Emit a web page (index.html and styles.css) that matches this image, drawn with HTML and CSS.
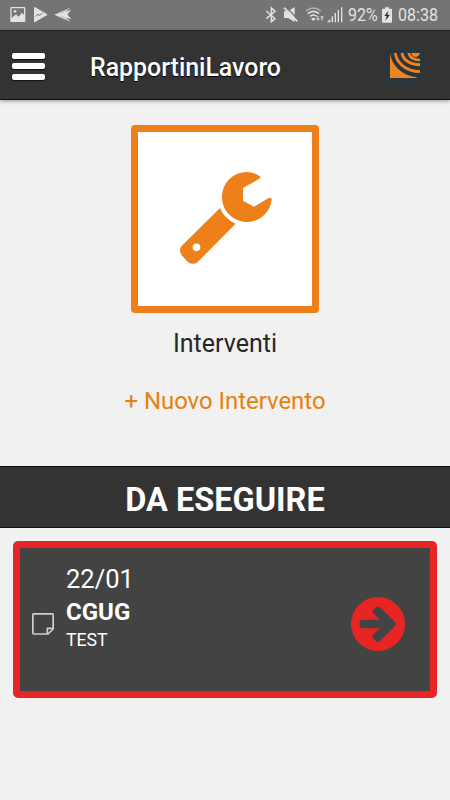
FILE: index.html
```html
<!DOCTYPE html>
<html lang="it">
<head>
<meta charset="utf-8">
<title>RapportiniLavoro</title>
<link rel="stylesheet" href="styles.css">
</head>
<body>
<div class="status">
  <svg class="notifications" width="63" height="18" viewBox="30 18 189 54" fill="#e2e2e2">
    <path fill-rule="evenodd" d="M34 21H73Q76 21 76 24V63Q76 66 73 66H34Q31 66 31 63V24Q31 21 34 21ZM35 25V54L48 43L56 50L66 38L72 45V25Z"/>
    <circle cx="45" cy="34" r="4"/>
    <path d="M102 23Q102 20 106 22L140 42Q143 44 140 46L106 66Q102 68 102 64Z"/>
    <path d="M107 49L114 42L118 47L128 39" fill="none" stroke="#747474" stroke-width="3"/>
    <path d="M163 44L211 23L198 35L214 29L202 43L214 58L198 53L211 65Z"/>
    <path d="M182 40L208 27M182 48L208 60" fill="none" stroke="#909090" stroke-width="1.5"/>
  </svg>
  <div class="indicators">
    <svg width="78" height="18" viewBox="342 18 234 54" fill="none" stroke="#e2e2e2" stroke-width="4.5">
      <path d="M346 33L372 56L361 65V24L372 34L346 56"/>
      <path d="M399 34H411L431 21V66L411 54H399Z" fill="#e2e2e2" stroke="none"/>
      <path d="M403 19L443 60" stroke="#747474" stroke-width="4"/>
      <path d="M399 23L439 64" stroke-width="5"/>
      <path d="M465 33Q487 15 510 33" stroke="#b0b0b0"/>
      <path d="M470 41Q487 27 504 41M477 49Q487 41 497 49" stroke-width="5"/>
      <path d="M480 56Q487 50 494 56L487 63Z" fill="#e2e2e2" stroke="none"/>
      <path d="M501 48V60M497 56L501 61L505 56M513 61V48M509 53L513 48L517 53" stroke-width="3"/>
      <path d="M528 67L538 57V67Z" fill="#e2e2e2" stroke="none"/>
      <path d="M544 67V49M553 67V39M562 67V30M572 67V22" stroke-width="4"/>
    </svg>
    <span class="percent"><span>92%</span></span>
    <svg class="battery" width="10" height="16" viewBox="0 0 30 48">
      <path d="M9 1H21V5H28Q30 5 30 7V45Q30 47 28 47H2Q0 47 0 45V7Q0 5 2 5H9Z" fill="#e2e2e2"/>
      <path d="M19 11L7 27H14L10 41L24 23H16Z" fill="#303030"/>
    </svg>
    <span class="clock"><span>08:38</span></span>
  </div>
</div>
<header class="topbar">
  <div class="menu"><i></i><i></i><i></i></div>
  <h1>RapportiniLavoro</h1>
  <svg class="logo" width="38" height="38" viewBox="0 0 114 114">
    <rect width="114" height="114" rx="3" fill="#2a363b"/>
    <path d="M12 21C17 58 46 88 92 94V96H12Z" fill="#ee8322"/>
    <g fill="none" stroke="#ee8322" stroke-width="8">
      <path d="M28 21C31 50 60 76 102 77"/>
      <path d="M48 21C51 42 73 56 102 56" stroke-width="9"/>
    </g>
    <path d="M64 21H72Q76 37 102 38V46Q70 47 64 21ZM76 21H102Q98 33 89 33Q79 33 76 21Z" fill="#ee8322"/>
  </svg>
</header>
<main>
  <section class="hero">
    <div class="tile">
      <svg width="174" height="174" viewBox="54 51 522 522">
        <path fill="#ed801b" d="M419 183Q425 188 417 192L369 219V257L402 275L445 250Q456 245 455 256A75 75 0 1 1 380 171Q400 171 419 183Z"/>
        <path fill="#ed801b" fill-rule="evenodd" d="M300 279Q312 310 347 326L234 440Q219 453 203 440L187 423Q174 408 184 394ZM241 397A11.500 11.500 0 1 0 218 397A11.500 11.500 0 1 0 241 397Z"/>
      </svg>
    </div>
    <div class="tile-label">Interventi</div>
    <div class="new-link">+ Nuovo Intervento</div>
  </section>
  <h2>DA ESEGUIRE</h2>
  <article class="card">
    <svg class="note" width="22" height="22" viewBox="0 0 66 66" fill="none" stroke="#cfcfcf" stroke-width="5" stroke-linejoin="round">
      <path d="M5 2.500H61Q63.500 2.500 63.500 5V48L48 63H5Q2.500 63 2.500 60V5Q2.500 2.500 5 2.500ZM46 62V46H63"/>
    </svg>
    <div class="info">
      <div class="date">22/01</div>
      <div class="client">CGUG</div>
      <div class="desc">TEST</div>
    </div>
    <svg class="go" width="54" height="54" viewBox="0 0 162 162">
      <circle cx="81" cy="81" r="81" fill="#e82525"/>
      <path fill="#434343" d="M32 68H86L68 50Q61 43 67 38L74 31Q81 25 88 32L132 75Q138 81 132 87L88 131Q81 138 74 131L67 124Q61 118 68 111L86 94H32Q26 94 26 88V74Q26 68 32 68Z"/>
    </svg>
  </article>
</main>
</body>
</html>
```
FILE: styles.css
```css
* { box-sizing: border-box; }
body {
  margin: 0;
  height: 800px;
  background: #f1f1f1;
  font-family: Roboto, "Liberation Sans", sans-serif;
  overflow: hidden;
}
svg { display: block; flex: none; }
.status {
  height: 30px;
  background: #747474;
  display: flex;
  align-items: center;
  justify-content: space-between;
  padding: 0 11px 0 10px;
  color: #e2e2e2;
  font-size: 18px;
  line-height: 30px;
}
.indicators { display: flex; align-items: center; }
.percent { width: 29px; margin-left: 5px; }
.clock { width: 41px; margin-left: 6px; }
.percent span, .clock span {
  display: inline-block;
  transform: scaleX(.89);
  transform-origin: left;
}
.battery { margin-left: 5px; }
.topbar {
  height: 70px;
  background: #333;
  border-top: 1px solid #222;
  border-bottom: 1px solid #111;
  box-shadow: 0 1px 4px rgba(0, 0, 0, .4);
  display: flex;
  align-items: center;
  padding: 0 26px 0 12px;
  position: relative;
}
.menu {
  display: grid;
  gap: 4.500px;
  width: 33px;
  margin-top: 2px;
}
.menu i {
  height: 6px;
  background: #fff;
  border-radius: 2px;
  box-shadow: 0 1px 1px #111;
}
h1 {
  margin: 5px 0 0 45px;
  flex: 1;
  color: #fff;
  font-size: 24.900px;
  font-weight: 500;
  line-height: 30px;
  text-shadow: 0 1px 1px #000;
}
.logo { margin-top: -1px; }
.hero {
  height: 366px;
  padding-top: 25px;
  display: flex;
  flex-direction: column;
  align-items: center;
}
.tile {
  width: 188px;
  height: 188px;
  background: #fff;
  border: 7px solid #ed801b;
  border-radius: 4px;
}
.tile-label, .new-link { font-size: 23.900px; line-height: 30px; }
.tile-label { margin-top: 16px; color: #272727; font-size: 25px; }
.new-link { margin-top: 27px; color: #e5810f; }
h2 {
  margin: 0;
  height: 62px;
  background: #333;
  border-top: 1px solid #111;
  border-bottom: 1px solid #111;
  color: #fff;
  text-align: center;
  font-size: 32.500px;
  font-weight: 700;
  line-height: 67px;
}
.card {
  margin: 13px 13px 0;
  height: 157px;
  background: #434343;
  border: 7px solid #e82525;
  border-radius: 5px;
  display: flex;
  align-items: center;
  padding: 0 25px 0 12px;
  color: #fff;
}
.note { margin-top: 8px; }
.info { flex: 1; margin: -25px 0 0 12px; }
.date { font-size: 25.500px; line-height: 34px; }
.client { font-size: 24px; line-height: 32px; font-weight: 700; }
.desc { font-size: 17.700px; line-height: 24px; }
.go { margin-top: 8px; }
```
